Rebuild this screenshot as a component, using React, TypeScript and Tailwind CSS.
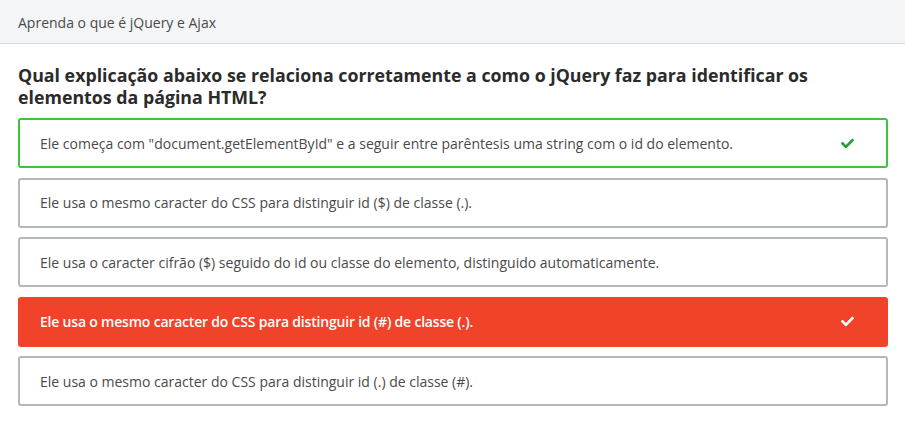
import React from "react";
import { FaCheck } from "react-icons/fa";

const options = [
  { text: 'Ele começa com "document.getElementById" e a seguir entre parêntesis uma string com o id do elemento.', state: "correct" },
  { text: "Ele usa o mesmo caracter do CSS para distinguir id ($) de classe (.).", state: "none" },
  { text: "Ele usa o caracter cifrão ($) seguido do id ou classe do elemento, distinguido automaticamente.", state: "none" },
  { text: "Ele usa o mesmo caracter do CSS para distinguir id (#) de classe (.).", state: "wrong" },
  { text: "Ele usa o mesmo caracter do CSS para distinguir id (.) de classe (#).", state: "none" },
];

export default function App() {
  return (
    <div className="w-[905px] h-[428px] bg-white" style={{ fontFamily: '"Open Sans", sans-serif' }}>
      <div className="h-[44px] bg-[#f4f5f7] border-b border-[#d6d8db] flex items-center px-[18px] pt-[1px] text-[14px] text-[#4a4a4a]">
        Aprenda o que é jQuery e Ajax
      </div>
      <div className="px-[18px] pr-[17px]">
        <h1 className="mt-[20px] text-[17.8px] font-bold leading-[22px] text-[#2b2b2b]">
          Qual explicação abaixo se relaciona corretamente a como o jQuery faz para identificar os elementos da página HTML?
        </h1>
        <div className="mt-[10px] flex flex-col gap-[9.5px]">
          {options.map((o, i) => {
            const cls =
              o.state === "correct"
                ? "border-2 border-[#3ec43c] bg-white text-[#4a4a4a]"
                : o.state === "wrong"
                ? "border-2 border-[#f0432a] bg-[#f0432a] text-white font-semibold tracking-[-0.2px]"
                : "border-2 border-[#b5b8bb] bg-white text-[#4a4a4a]";
            return (
              <div key={i} className={`h-[50px] rounded-[3px] flex items-center justify-between pl-[20px] pr-[32px] text-[14px] ${cls}`}>
                <span>{o.text}</span>
                {o.state === "correct" && <FaCheck className="text-[#259c39] w-[13px] h-[13px]" />}
                {o.state === "wrong" && <FaCheck className="text-white w-[13px] h-[13px]" />}
              </div>
            );
          })}
        </div>
      </div>
    </div>
  );
}
